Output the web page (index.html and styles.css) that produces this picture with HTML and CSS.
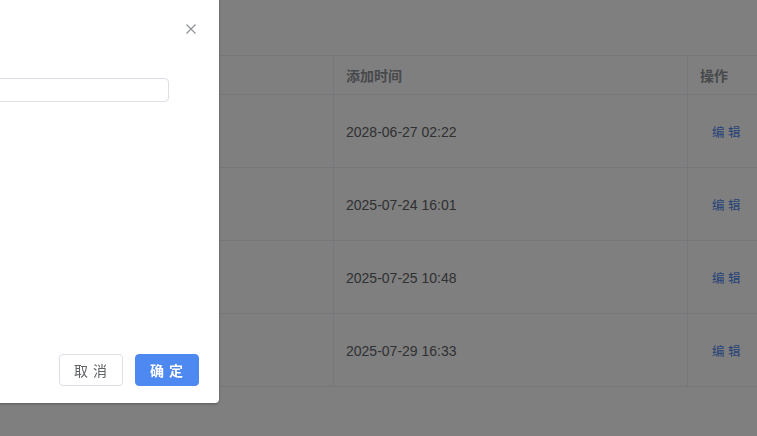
FILE: index.html
```html
<!DOCTYPE html>
<html lang="zh">
<head>
<meta charset="utf-8">
<link rel="stylesheet" href="styles.css">
</head>
<body>
<div class="page">
  <div class="table">
    <div class="row head">
      <div class="cell c1"></div>
      <div class="cell c2">添加时间</div>
      <div class="cell c3">操作</div>
    </div>
    <div class="row">
      <div class="cell c1"></div>
      <div class="cell c2">2028-06-27 02:22</div>
      <div class="cell c3"><a class="link">编 辑</a></div>
    </div>
    <div class="row">
      <div class="cell c1"></div>
      <div class="cell c2">2025-07-24 16:01</div>
      <div class="cell c3"><a class="link">编 辑</a></div>
    </div>
    <div class="row">
      <div class="cell c1"></div>
      <div class="cell c2">2025-07-25 10:48</div>
      <div class="cell c3"><a class="link">编 辑</a></div>
    </div>
    <div class="row">
      <div class="cell c1"></div>
      <div class="cell c2">2025-07-29 16:33</div>
      <div class="cell c3"><a class="link">编 辑</a></div>
    </div>
  </div>
</div>
<div class="overlay"></div>
<div class="dialog">
  <button class="close" aria-label="关闭">
    <svg width="10" height="10" viewBox="0 0 10 10"><path d="M0.5 0.5 L9.5 9.5 M9.5 0.5 L0.5 9.5" stroke="#8c8f96" stroke-width="1.1" fill="none"/></svg>
  </button>
  <div class="dialog-body">
    <div class="input"></div>
  </div>
  <div class="dialog-footer">
    <button class="btn">取 消</button>
    <button class="btn primary">确 定</button>
  </div>
</div>
</body>
</html>
```

FILE: styles.css
```css
html, body {
  margin: 0;
  padding: 0;
  background: #ffffff;
  overflow: hidden;
  width: 757px;
  height: 436px;
  font-family: "Liberation Sans", "Noto Sans CJK SC", sans-serif;
}
.page {
  padding-top: 55px;
}
.table {
  width: 790px;
  border-top: 1px solid #ebeef5;
}
.row {
  display: flex;
  height: 73px;
  border-bottom: 1px solid #ebeef5;
  box-sizing: border-box;
}
.row.head {
  height: 39px;
}
.cell {
  display: flex;
  align-items: center;
  padding-left: 12px;
  padding-top: 1px;
  box-sizing: border-box;
  font-size: 14px;
  color: #606266;
}
.head .cell {
  color: #909399;
  font-weight: bold;
  padding-top: 0;
}
.c1 {
  width: 334px;
  border-right: 1px solid #ebeef5;
}
.c2 {
  width: 354px;
  border-right: 1px solid #ebeef5;
}
.c3 {
  flex: 1;
}
.link {
  color: #4e88f1;
  font-size: 12.5px;
  margin-left: 12px;
}
.overlay {
  position: fixed;
  inset: 0;
  background: rgba(0, 0, 0, 0.5);
}
.dialog {
  position: fixed;
  left: -281px;
  top: -16px;
  width: 500px;
  height: 419px;
  background: #ffffff;
  border-radius: 4px;
  display: flex;
  flex-direction: column;
  box-shadow: 0 1px 3px rgba(0, 0, 0, 0.3);
}
.close {
  position: absolute;
  top: 40px;
  right: 23px;
  width: 10px;
  height: 10px;
  padding: 0;
  border: none;
  background: none;
  display: flex;
}
.dialog-body {
  padding: 94px 50px 0 20px;
}
.input {
  height: 24px;
  box-sizing: border-box;
  border: 1px solid #dcdfe6;
  border-radius: 4px;
}
.dialog-footer {
  margin-top: auto;
  display: flex;
  justify-content: flex-end;
  gap: 12px;
  padding: 0 20px 17px;
}
.btn {
  width: 64px;
  height: 32px;
  box-sizing: border-box;
  border: 1px solid #dcdfe6;
  border-radius: 4px;
  background: #ffffff;
  color: #606266;
  font-family: "Noto Sans CJK SC", sans-serif;
  font-size: 14px;
  letter-spacing: 1px;
  padding: 0;
}
.btn.primary {
  background: #4e88f1;
  border-color: #4e88f1;
  color: #ffffff;
  font-weight: bold;
}
```
